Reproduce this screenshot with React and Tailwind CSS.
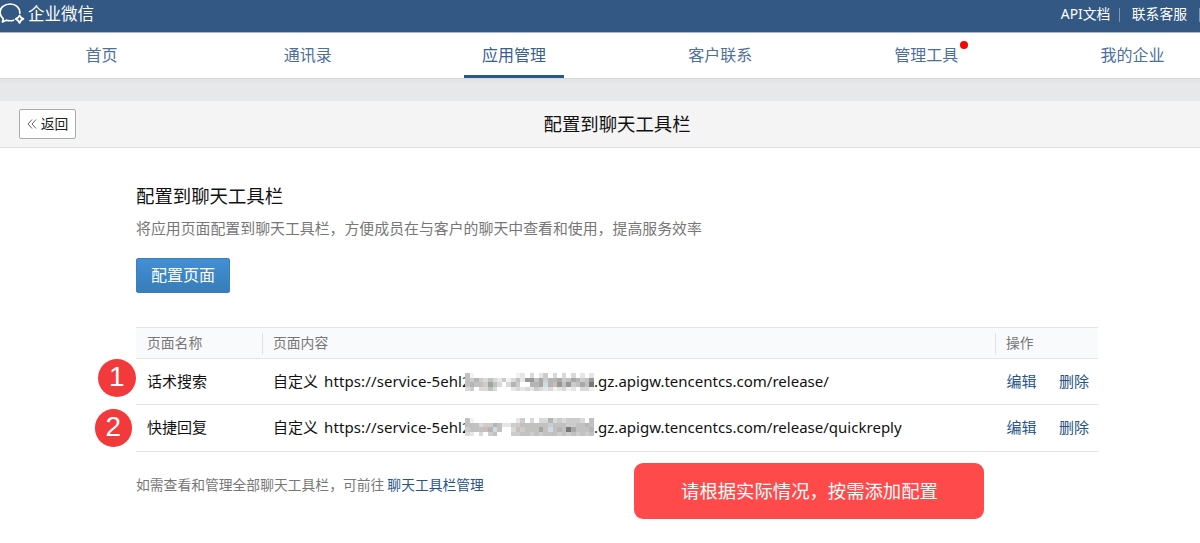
import React from "react";

const SHADES = {
  1: "#777777",
  2: "#989898",
  3: "#a8a8a8",
  4: "#b5b5b5",
  5: "#c1c1c1",
  6: "#cccccc",
  7: "#d9d9d9",
  8: "#e6e6e6",
  9: "#f2f2f2",
  r: "#cbbcba",
  g: "#a3a599",
  b: "#cfdae3",
};

const MASKS = [
  [
    "59         98 7 86 7 7 7 8 8",
    "5646757869758225364436534652",
    "545r6g57 746  443b4r25265351",
    "76 7757   87878678798798 779",
  ],
  [
    "59         86 7 7747676667 5",
    "5557664588665555556555665545",
    "6555r4b5  7r6555g5b545135554",
    "78 7 65   665565655565656565",
  ],
];

function Mosaic({ rows }) {
  return (
    <svg width="129" height="18" viewBox="0 0 28 4" preserveAspectRatio="none" shapeRendering="crispEdges" className="relative block shrink-0">
      {rows.flatMap((row, y) =>
        [...row].map((c, x) =>
          c === " " ? null : <rect key={`${x}-${y}`} x={x} y={y} width="1" height="1" fill={SHADES[c]} />
        )
      )}
    </svg>
  );
}

const NAV = ["首页", "通讯录", "应用管理", "客户联系", "管理工具", "我的企业"];

const ROWS = [
  { n: 1, name: "话术搜索", tail: ".gz.apigw.tencentcs.com/release/", tailLength: "w-[236px]", badge: "left-[-38px] top-0", pad: "" },
  { n: 2, name: "快捷回复", tail: ".gz.apigw.tencentcs.com/release/quickreply", tailLength: "w-[309px]", badge: "left-[-41.5px] top-[4px]", pad: "pb-px" },
];

function Header() {
  return (
    <header className="flex h-[33px] items-start justify-between border-b border-[#a9b8ca] bg-[#325883] text-white">
      <div className="flex h-7 items-center">
        <svg width="28" height="28" viewBox="0 0 28 28" fill="none" stroke="#fff" strokeWidth="1.7" strokeLinejoin="round" strokeLinecap="round">
          <path d="M19.8 13.2C20.2 7.8 15.8 4 10.2 4C4.5 4 0 7.6 0 12.2C0 15 1.2 17.1 3.3 18.8L2.4 22L6.4 20.2C8.7 20.9 11.2 20.9 13.6 20.2" />
          <path d="M19.6 15.4L21 17.6L23.4 18.9L21 20.3L19.6 22.9L18 20.4L15.8 18.9L18.1 17.6Z" strokeWidth="1.8" />
        </svg>
        <span className="text-[16.5px] leading-7">企业微信</span>
      </div>
      <div className="flex h-[29px] items-center text-[13.8px]">
        <span className="w-[50px] whitespace-nowrap">API文档</span>
        <span className="ml-2 h-3.5 w-px bg-[#7f98b5]" />
        <span className="ml-3">联系客服</span>
        <span className="ml-3 h-3.5 w-px bg-[#7f98b5]" />
      </div>
    </header>
  );
}

function Nav() {
  return (
    <nav className="-mx-[1.5px] flex h-[46px] border-b border-[#d8d9da] bg-white text-[16px] text-[#4e6f9b]">
      {NAV.map((label, i) => (
        <div key={label} className="flex w-[206.2px] shrink-0 justify-center">
          <div
            className={
              i === 2
                ? "flex h-[45px] w-[100px] justify-center border-b-[3px] border-[#2b5783] text-[#38608f]"
                : "flex h-[45px] w-[100px] justify-center"
            }
          >
            <span className="relative leading-[45px]">
              {label}
              {i === 4 && <i className="absolute -right-[9.5px] top-2 size-2 rounded-full bg-[#f90505]" />}
            </span>
          </div>
        </div>
      ))}
    </nav>
  );
}

export default function App() {
  return (
    <div className="h-[543px] w-[1200px] overflow-hidden bg-white font-['Noto_Sans','Noto_Sans_CJK_SC',sans-serif] text-[15px] text-[#111]">
      <Header />
      <Nav />
      <div className="h-[22px] bg-linear-to-b from-[#e2e3e4] to-[#e7e8ea] to-25%" />
      <div className="grid h-[47px] grid-cols-[1fr_auto_1fr] items-center border-b border-[#dcdfe0] bg-[#f4f4f4]">
        <button className="ml-[19px] flex h-[30px] w-[57px] items-center justify-center gap-1 rounded-xs border border-[#aaa] bg-white text-[13.8px] text-[#222]">
          <svg width="10" height="10" viewBox="0 0 10 10" fill="none" stroke="#666" strokeWidth="1">
            <path d="M5 .5L1 5L5 9.5M9 .5L5 5L9 9.5" />
          </svg>
          <span>返回</span>
        </button>
        <h1 className="ml-[35px] w-[148px] whitespace-nowrap text-[18.4px]">配置到聊天工具栏</h1>
      </div>

      <main className="ml-[136px] w-[962px] pt-[35px]">
        <h2 className="h-[26px] text-[18.4px] leading-[26px]">配置到聊天工具栏</h2>
        <p className="mt-[7px] h-6 whitespace-nowrap text-[14.9px] leading-6 text-[#777]">
          将应用页面配置到聊天工具栏，方便成员在与客户的聊天中查看和使用，提高服务效率
        </p>
        <button className="mt-[18px] flex h-[35px] w-[94px] items-center justify-center rounded-xs border border-[#3880c0] bg-linear-to-b from-[#428fd3] to-[#377eb9] pb-px text-[16px] text-white">
          配置页面
        </button>

        <section className="mt-[34px]">
          <div className="flex h-8 items-center border-y border-[#e3e4e6] bg-[#f9fafc] text-[13.8px] text-[#777]">
            <div className="w-[126px] pl-[11px]">页面名称</div>
            <div className="flex h-[21px] w-[733px] items-center border-l border-[#dfe1e3] pl-2.5">页面内容</div>
            <div className="flex h-[21px] items-center border-l border-[#dfe1e3] pl-2.5">操作</div>
          </div>
          {ROWS.map((row) => (
            <div key={row.n} className={`relative flex h-[46.3px] items-center border-b border-[#e2e3e4] ${row.pad}`}>
              <span className={`absolute flex size-[37.5px] items-center justify-center rounded-full bg-[#f23a3c] pb-0.5 font-['Liberation_Sans',sans-serif] text-[28px] leading-none text-white ${row.badge}`}>
                {row.n}
              </span>
              <span className="w-[137px] shrink-0 pl-[11px]">{row.name}</span>
              <span className="w-[51px] shrink-0 whitespace-nowrap">自定义</span>
              <span className="w-[141px] shrink-0 whitespace-nowrap tracking-[0.12px]">https://service-5ehl2</span>
              <Mosaic rows={MASKS[row.n - 1]} />
              <span className={`shrink-0 whitespace-nowrap tracking-[0.015px] ${row.tailLength}`}>{row.tail}</span>
              <span className="ml-auto flex gap-[22.5px] pr-[9px] text-[#275488]">
                <a>编辑</a>
                <a>删除</a>
              </span>
            </div>
          ))}
        </section>

        <div className="flex items-start justify-between">
          <p className="mt-[21px] flex gap-[3px] text-[13.8px] leading-6 text-[#777]">
            <span>如需查看和管理全部聊天工具栏，可前往</span>
            <a className="text-[#275488]">聊天工具栏管理</a>
          </p>
          <div className="mr-[114px] mt-[11px] flex h-14 w-[350px] items-center justify-center rounded-[9px] bg-[#ff4a4b] pl-px text-[18.35px] text-white">
            请根据实际情况，按需添加配置
          </div>
        </div>
      </main>
    </div>
  );
}
